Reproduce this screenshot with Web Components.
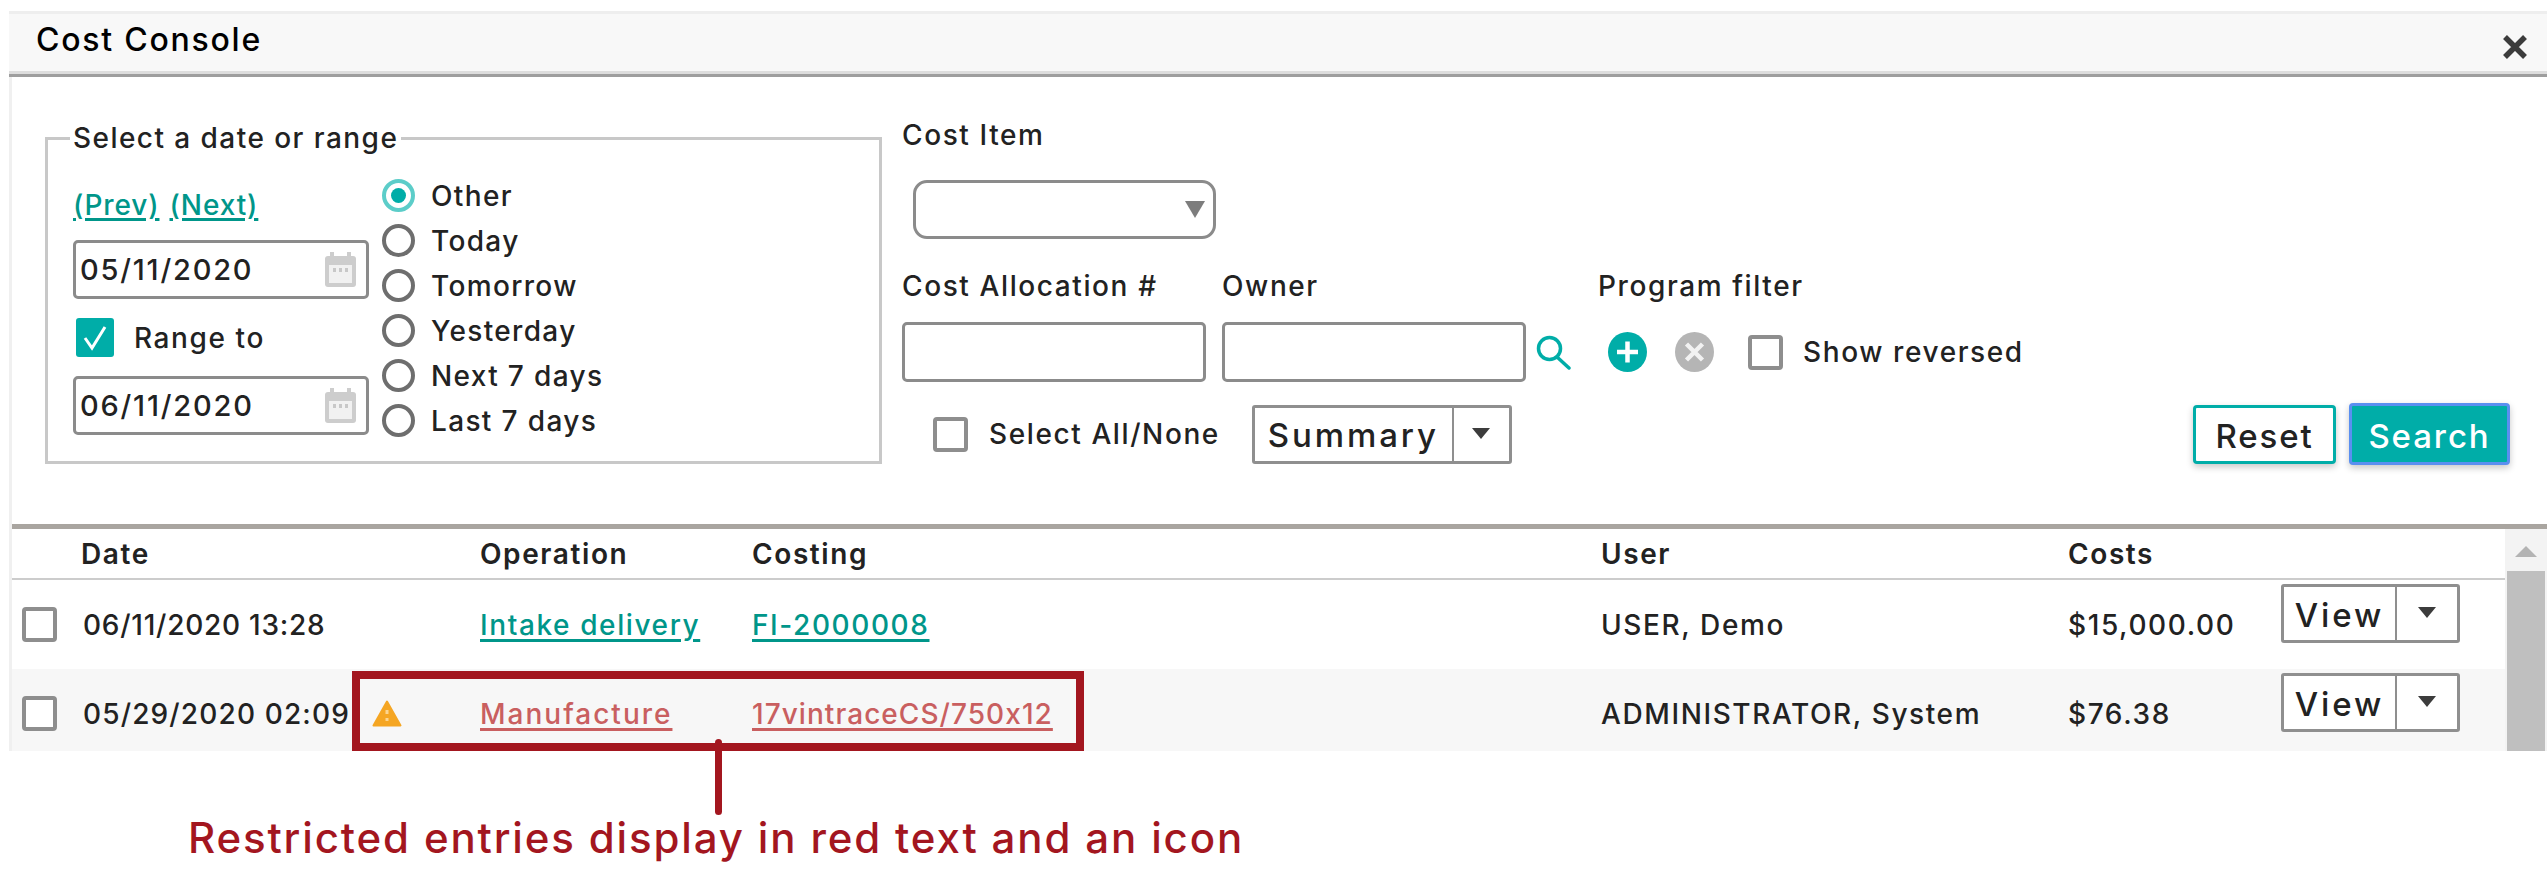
<!DOCTYPE html>
<html lang="en"><head><meta charset="utf-8"><title>Cost Console</title>
<style>
html,body{margin:0;padding:0;background:#fff}
body{width:2547px;height:888px;overflow:hidden;font:500 28px/30px Inter,"Liberation Sans",sans-serif;color:#222;letter-spacing:1.6px}
</style></head><body>
<cost-console></cost-console>
<script>
const ICON={
cal:`<svg width="31" height="35" viewBox="0 0 31 35"><rect x="0" y="4" width="31" height="31" rx="3" fill="#cdcdcd"/><rect x="4" y="13" width="23" height="18" fill="#f1f1f1"/><rect x="5" y="0" width="4" height="7" fill="#cdcdcd"/><rect x="22" y="0" width="4" height="7" fill="#cdcdcd"/><g fill="#c8c8c8"><rect x="8" y="16" width="3" height="4"/><rect x="14" y="16" width="3" height="4"/><rect x="20" y="16" width="3" height="4"/></g></svg>`,
search:`<svg width="35" height="35" viewBox="0 0 35 35" fill="none" stroke="#00ada8"><circle cx="13.500" cy="13.500" r="11" stroke-width="3.500"/><path d="M21 22 L33 33" stroke-width="3.500" stroke-linecap="round"/></svg>`,
plus:`<svg width="39" height="40" viewBox="0 0 39 40"><ellipse cx="19.500" cy="20" rx="19.500" ry="20" fill="#00ada8"/><path d="M19.500 9.500v21M9 20h21" stroke="#fff" stroke-width="4.500"/></svg>`,
cross:`<svg width="39" height="40" viewBox="0 0 39 40"><ellipse cx="19.500" cy="20" rx="19.500" ry="20" fill="#b5b5b5"/><path d="M11.500 12l16 16M27.500 12l-16 16" stroke="#f2f2f2" stroke-width="4.500"/></svg>`,
warn:`<svg width="30" height="27" viewBox="0 0 30 27"><path d="M15 1.500 L28.500 25.500 H1.500 Z" fill="#f5a623" stroke="#f5a623" stroke-width="2" stroke-linejoin="round"/><rect x="13.500" y="10" width="3" height="4" fill="#fcd58f"/><rect x="13.500" y="18" width="3" height="3" fill="#fcd58f"/></svg>`,
close:`<svg width="26" height="26" viewBox="0 0 26 26"><path d="M3 3L23 23M23 3L3 23" stroke="#3c3c3c" stroke-width="5.500"/></svg>`,
check:`<svg width="38" height="39" viewBox="0 0 38 39"><rect width="38" height="39" rx="3" fill="#00ada8"/><path d="M9 20l7 10L29 9" fill="none" stroke="#fff" stroke-width="3"/></svg>`
};
function def(name,html,init){
  const t=document.createElement('template');t.innerHTML=html;
  customElements.define(name,class extends HTMLElement{
    connectedCallback(){ if(this.shadowRoot) return; const r=this.attachShadow({mode:'open'}); r.appendChild(t.content.cloneNode(true)); if(init) init(this,r); }
  });
}
def('x-icon',`<style>:host{display:inline-flex;line-height:0;flex:none}</style><span id="i"></span>`,(h,r)=>{r.getElementById('i').innerHTML=ICON[h.getAttribute('name')]});
def('x-check',`<style>:host{display:flex;align-items:center;flex:none}
.b{box-sizing:border-box;width:35px;height:35px;border:4px solid #8e8e8e;border-radius:4px;background:#fff;flex:none}
.t{margin-left:var(--g,20px);white-space:nowrap}</style><span class="b" id="b"></span><span class="t"><slot></slot></span>`,(h,r)=>{
  if(h.hasAttribute('checked')){const b=r.getElementById('b');b.style.cssText='border:0;width:38px;height:39px';b.innerHTML=ICON.check;}
});
def('x-radio',`<style>:host{display:flex;align-items:center;height:45px}
.c{box-sizing:border-box;width:33px;height:33px;border-radius:50%;border:4px solid #6e6e6e;background:#fff;flex:none;margin-right:16px;display:flex;align-items:center;justify-content:center}
:host([on]) .c{border-color:#5ccdc9}
:host([on]) .c i{display:block;width:15px;height:15px;border-radius:50%;background:#00ada8}
</style><span class="c"><i></i></span><span><slot></slot></span>`);
def('x-date',`<style>:host{display:flex;box-sizing:border-box;width:296px;height:59px;border:3px solid #8b8b8b;border-radius:5px;align-items:center;padding:0 10px 0 4px;background:#fff;font-size:29px;letter-spacing:1.8px}
span{flex:1;white-space:nowrap}</style><span><slot></slot></span><x-icon name="cal"></x-icon>`);
def('x-input',`<style>:host{display:block;box-sizing:border-box;width:304px;height:60px;border:3px solid #8b8b8b;border-radius:5px;background:#fff;flex:none}</style>`);
def('x-select',`<style>:host{display:flex;box-sizing:border-box;width:303px;height:59px;margin-left:11px;border:3px solid #8b8b8b;border-radius:14px;align-items:center;justify-content:flex-end;padding-right:8px}
i{width:0;height:0;border-left:10px solid transparent;border-right:10px solid transparent;border-top:17px solid #7d7d7d}</style><i></i>`);
def('x-split',`<style>:host{display:inline-flex;box-sizing:border-box;height:59px;border:3px solid #8f8f8f;border-radius:3px;background:#fff;font-size:33px;letter-spacing:2.9px;flex:none;align-items:stretch;color:#222}
.l{display:flex;align-items:center;justify-content:center;box-sizing:border-box;width:var(--l);border-right:2px solid #8f8f8f;white-space:nowrap;padding-top:2px}
.r{flex:1;display:flex;align-items:center;justify-content:center}
i{width:0;height:0;border-left:9px solid transparent;border-right:9px solid transparent;border-top:11px solid #3c3c3c;margin-top:-2px}
</style><span class="l"><slot></slot></span><span class="r"><i></i></span>`);
def('x-btn',`<style>:host{display:flex;align-items:center;justify-content:center;box-sizing:border-box;font-size:33px;letter-spacing:1.9px;border-radius:4px;flex:none;padding-top:3px;box-shadow:0 3px 7px rgba(0,0,0,.22)}
</style><slot></slot>`);
def('console-header',`<style>:host{display:flex;align-items:center;justify-content:space-between;box-sizing:border-box;height:66px;border-top:3px solid #eee;background:#f8f8f8;border-bottom:3px solid #9e9e9e;box-shadow:inset 0 -3px 0 #ddd;padding:0 19px 8px 27px;font-size:32px;letter-spacing:1.75px;color:#000}
x-icon{margin-top:14px}</style><span><slot></slot></span><x-icon name="close"></x-icon>`);
def('date-range',`<style>:host{display:block;flex:none;margin-left:33px;width:837px}
fieldset{box-sizing:border-box;margin:0;width:837px;height:341px;border:3px solid #c8c8c8;padding:0 0 0 25px;display:grid;grid-template-columns:309px 1fr;min-width:0}
legend{padding:0 3px 0 3px;margin-left:-3px;line-height:30px;height:30px;white-space:nowrap;letter-spacing:1.45px}
.left{display:flex;flex-direction:column;align-items:flex-start}
a{color:#00968a;text-decoration:underline;text-underline-offset:3px;text-decoration-thickness:3px;margin-right:10px;letter-spacing:.9px}
.links{margin-top:37px;height:30px;white-space:nowrap}
x-date{margin-top:20px}
.left x-check{margin:19px 0 19px 3px}
.radios{padding-top:20px;margin-left:0;letter-spacing:1.35px}
</style><fieldset><legend>Select a date or range</legend>
<div class="left"><div class="links"><a>(Prev)</a><a>(Next)</a></div><x-date>05/11/2020</x-date><x-check checked>Range to</x-check><x-date style="margin-top:0">06/11/2020</x-date></div>
<div class="radios"><x-radio on>Other</x-radio><x-radio>Today</x-radio><x-radio>Tomorrow</x-radio><x-radio>Yesterday</x-radio><x-radio>Next 7 days</x-radio><x-radio>Last 7 days</x-radio></div>
</fieldset>`);
def('filter-panel',`<style>:host{display:flex;flex-direction:column;flex:1;margin-left:20px;margin-right:37px;padding-top:43px;min-width:0}
.lab{height:30px;white-space:nowrap}
x-select{margin-top:30px}
.labs{display:flex;margin-top:32px}.labs span{display:block;white-space:nowrap}
.row4{display:flex;align-items:center;margin-top:21px}
.row5{display:flex;align-items:center;margin-top:21px;height:62px;padding-left:31px}
.sp{flex:1}
</style><div class="lab">Cost Item</div><x-select></x-select>
<div class="labs"><span style="width:320px">Cost Allocation #</span><span style="width:376px">Owner</span><span>Program filter</span></div>
<div class="row4"><x-input></x-input><x-input style="margin-left:16px"></x-input><x-icon name="search" style="margin-left:10px"></x-icon><x-icon name="plus" style="margin-left:37px"></x-icon><x-icon name="cross" style="margin-left:28px"></x-icon><x-check style="margin-left:34px">Show reversed</x-check></div>
<div class="row5"><x-check style="--g:21px">Select All/None</x-check><x-split style="--l:199px;width:260px;margin-left:32px">Summary</x-split><span class="sp"></span>
<x-btn style="width:143px;height:59px;border:3px solid #00ada8;background:#fff;color:#222">Reset</x-btn><x-btn style="width:161px;height:62px;margin-left:13px;border:3px solid #5a8ff0;background:#00ada8;color:#fff">Search</x-btn></div>`);
def('cost-row',`<style>:host{display:grid;grid-template-columns:69px 290px 109px 272px 849px 467px 213px 224px;height:89px;align-items:center;background:var(--bg,#fff);flex:none;white-space:nowrap}
.cb{padding-left:10px;display:flex}
a{color:var(--link,#00968a);text-decoration:underline;text-underline-offset:4px;text-decoration-thickness:3px}
#op{letter-spacing:var(--ols,1.6px)}#co{letter-spacing:var(--cls,1.6px)}
.d{padding-left:2px;letter-spacing:var(--dls,.75px)}
x-split{align-self:start;margin-top:4px;width:179px;--l:113px}
#ic{padding-left:1px;display:flex}
.b{box-sizing:border-box;width:35px;height:35px;border:4px solid #8e8e8e;border-radius:4px;background:#fff;display:block}
</style><span class="cb"><span class="b"></span></span><span class="d" id="d"></span><span id="ic"></span><span><a id="op"></a></span><span><a id="co"></a></span><span id="u"></span><span id="c"></span><x-split>View</x-split>`,(h,r)=>{
  for(const k of ['d','op','co','u','c']) r.getElementById(k).textContent=h.getAttribute(k);
  if(h.hasAttribute('warn')) r.getElementById('ic').innerHTML='<x-icon name="warn"></x-icon>';
});
def('cost-table',`<style>:host{display:flex;border-top:5px solid #a9a5a0;position:relative}
.main{flex:1;min-width:0}
.head{display:grid;grid-template-columns:69px 290px 109px 272px 849px 467px 213px 224px;height:49px;align-items:center;border-bottom:2px solid #ccc;font-weight:600;white-space:nowrap}
.body{height:171px;overflow:hidden;display:flex;flex-direction:column}
.scroll{width:42px;flex:none;background:#f3f3f3;display:flex;flex-direction:column;align-items:center}
.scroll i{width:0;height:0;margin-top:17px;border-left:11px solid transparent;border-right:11px solid transparent;border-bottom:11px solid #b3b3b3}
.scroll b{display:block;width:38px;margin-top:14px;flex:1;background:#bfbfbf}
.box{position:absolute;left:340px;top:142px;width:732px;height:80px;box-sizing:border-box;border:8px solid #a3161f;pointer-events:none}
.stem{position:absolute;left:703px;top:210px;width:7px;height:76px;border-radius:4px;background:#a3161f}
</style><div class="main"><div class="head"><span></span><span>Date</span><span></span><span>Operation</span><span>Costing</span><span>User</span><span>Costs</span><span></span></div>
<div class="body"><cost-row d="06/11/2020 13:28" op="Intake delivery" co="FI-2000008" u="USER, Demo" c="$15,000.00"></cost-row>
<cost-row style="--bg:#f7f7f7;--link:#c95f60;--dls:1.15px;--ols:2px;--cls:1.05px" warn d="05/29/2020 02:09" op="Manufacture" co="17vintraceCS/750x12" u="ADMINISTRATOR, System" c="$76.38"></cost-row></div></div>
<div class="scroll"><i></i><b></b></div><div class="box"></div><div class="stem"></div>`);
def('cost-console',`<style>:host{display:block;margin:11px 0 0 9px}
.form{display:flex;height:447px;border-left:3px solid #f0f0f0;box-sizing:border-box}
.note{margin:62px 0 0 179px;font-size:42px;line-height:50px;color:#a3161f;letter-spacing:1.85px;white-space:nowrap}
.tbl{border-left:3px solid #f0f0f0}
date-range{margin-top:46px}
</style><console-header>Cost Console</console-header><div class="form"><date-range></date-range><filter-panel></filter-panel></div><div class="tbl"><cost-table></cost-table></div><div class="note">Restricted entries display in red text and an icon</div>`);
</script></body></html>
